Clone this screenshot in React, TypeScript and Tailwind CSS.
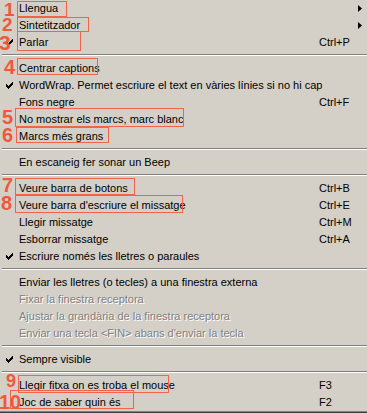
import React from "react";

type Item =
  | { sep: true }
  | {
      sep?: false;
      label: string;
      shortcut?: string;
      checked?: boolean;
      submenu?: boolean;
      disabled?: boolean;
    };

const items: Item[] = [
  { label: "Llengua", submenu: true },
  { label: "Sintetitzador", submenu: true },
  { label: "Parlar", shortcut: "Ctrl+P", checked: true },
  { sep: true },
  { label: "Centrar captions" },
  { label: "WordWrap. Permet escriure el text en vàries línies si no hi cap", checked: true },
  { label: "Fons negre", shortcut: "Ctrl+F" },
  { label: "No mostrar els marcs, marc blanc" },
  { label: "Marcs més grans" },
  { sep: true },
  { label: "En escaneig fer sonar un Beep" },
  { sep: true },
  { label: "Veure barra de botons", shortcut: "Ctrl+B" },
  { label: "Veure barra d'escriure el missatge", shortcut: "Ctrl+E" },
  { label: "Llegir missatge", shortcut: "Ctrl+M" },
  { label: "Esborrar missatge", shortcut: "Ctrl+A" },
  { label: "Escriure només les lletres o paraules", checked: true },
  { sep: true },
  { label: "Enviar les lletres (o tecles) a una finestra externa" },
  { label: "Fixar la finestra receptora", disabled: true },
  { label: "Ajustar la grandària de la finestra receptora", disabled: true },
  { label: "Enviar una tecla <FIN> abans d'enviar la tecla", disabled: true },
  { sep: true },
  { label: "Sempre visible", checked: true },
  { sep: true },
  { label: "Llegir fitxa on es troba el mouse", shortcut: "F3" },
  { label: "Joc de saber quin és", shortcut: "F2" },
];

// annotation boxes: left, top, width, height
const boxes = [
  { x: 17, y: 1, w: 50, h: 16 },
  { x: 17, y: 17, w: 72, h: 15 },
  { x: 17, y: 31, w: 64, h: 20 },
  { x: 17, y: 58, w: 81, h: 17 },
  { x: 15, y: 108, w: 169, h: 19 },
  { x: 16, y: 127, w: 93, h: 16 },
  { x: 15, y: 178, w: 120, h: 17 },
  { x: 15, y: 195, w: 168, h: 18 },
  { x: 18, y: 375, w: 151, h: 18 },
  { x: 10, y: 390, w: 124, h: 19 },
];

const numbers = [
  { n: "1", x: 4, y: 0, s: 19 },
  { n: "2", x: 2, y: 15, s: 19 },
  { n: "3", x: -1, y: 32, s: 21 },
  { n: "4", x: 4, y: 57, s: 20 },
  { n: "5", x: 2, y: 107, s: 20 },
  { n: "6", x: 2, y: 125, s: 20 },
  { n: "7", x: 2, y: 175, s: 20 },
  { n: "8", x: 1, y: 193, s: 20 },
  { n: "9", x: 6, y: 372, s: 18 },
  { n: "10", x: -1, y: 392, s: 20 },
];

function Check() {
  return (
    <svg width="7" height="7" viewBox="0 0 7 7" className="block">
      <path d="M0 2h1v1h1v1h1v-1h1v-1h1v-1h1v-1h1v3h-1v1h-1v1h-1v1h-1v1h-1v-1h-1v-1h-1z" fill="#000" />
    </svg>
  );
}

function Arrow() {
  return (
    <svg width="4" height="7" viewBox="0 0 4 7" className="block">
      <path d="M0 0L4 3.5L0 7z" fill="#000" />
    </svg>
  );
}

export default function App() {
  return (
    <div
      className="relative w-[367px] h-[413px] overflow-hidden bg-[#d4d0c8] text-[11px] text-black"
      style={{ fontFamily: '"Liberation Sans", Arial, sans-serif' }}
    >
      <div className="flex flex-col">
        {items.map((it, i) =>
          it.sep ? (
            <div key={i} className="h-[9px] pt-[3px] pl-[2px]">
              <div className="border-t border-t-[#808080] border-b border-b-white" />
            </div>
          ) : (
            <div key={i} className="h-[17px] flex items-center leading-[17px] whitespace-nowrap">
              <div className="w-[19px] pl-[6px] flex items-center">{it.checked && <Check />}</div>
              <div
                className={`w-[300px] ${
                  it.disabled ? "text-[#808080] [text-shadow:1px_1px_0_#fff]" : ""
                }`}
              >
                {it.label}
              </div>
              <div className="w-[39px]">{it.shortcut}</div>
              <div className="w-[4px]">{it.submenu && <Arrow />}</div>
            </div>
          )
        )}
      </div>
      <div className="border-b border-b-[#808080]" />
      <div className="border-b border-b-[#404040]" />

      {boxes.map((b, i) => (
        <div
          key={i}
          className="absolute border-[1.5px] border-[#f26449]"
          style={{ left: b.x, top: b.y, width: b.w, height: b.h }}
        />
      ))}
      {numbers.map((n, i) => (
        <div
          key={i}
          className="absolute font-bold leading-none text-[#f0583c]"
          style={{ left: n.x, top: n.y, fontSize: n.s }}
        >
          {n.n}
        </div>
      ))}
    </div>
  );
}
